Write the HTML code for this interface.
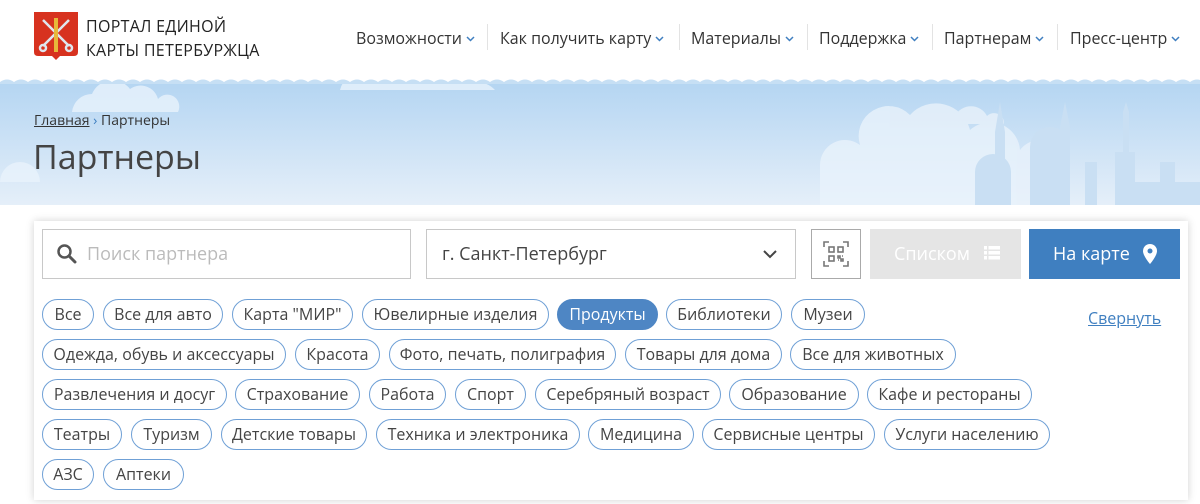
<!DOCTYPE html>
<html><head><meta charset="utf-8"><style>
*{box-sizing:border-box;margin:0;padding:0}
body{width:1200px;height:504px;overflow:hidden;background:#fff;font-family:"Open Sans","Liberation Sans","DejaVu Sans",sans-serif;color:#333;position:relative}
.abs{position:absolute}
.nav{position:absolute;top:27px;font-size:16px;color:#333;white-space:nowrap}
.nav svg{margin-left:4px;vertical-align:2px}
.sep{position:absolute;top:24px;width:1px;height:26px;background:#e3e3e3}
.banner{position:absolute;left:0;top:82px;width:1200px;height:123px;background:linear-gradient(#b4d5f2,#e5eff9);overflow:hidden}
.cloud{position:absolute;background:rgba(240,246,252,.75);border-radius:30px 30px 0 0}
.card{position:absolute;left:34px;top:221px;width:1154px;height:279px;background:#fff;box-shadow:0 0 8px rgba(0,0,0,.18)}
.chip{position:absolute;height:31px;border:1.5px solid #6fa0d6;border-radius:16px;font-size:16px;line-height:28px;text-align:center;color:#444;white-space:nowrap}
.chip.on{background:#4e86c4;border-color:#4e86c4;color:#fff}
</style></head><body>
<svg class="abs" style="left:34px;top:12px" width="44" height="48" viewBox="0 0 44 48"><path d="M0 0H44V40Q44 44 40 44H26L22 48L18 44H4Q0 44 0 40Z" fill="#d7321f"/><g stroke="#dfe6ee" stroke-width="2.5" fill="none"><path d="M9 34L35 8M35 34L9 8"/><circle cx="9" cy="36" r="3"/><circle cx="35" cy="36" r="3"/></g><path d="M20 6h4v34h-4z" fill="#e7b83a"/></svg>
<div class="abs" style="left:86px;top:14px;font-size:16px;line-height:24px;letter-spacing:.3px;color:#222">ПОРТАЛ ЕДИНОЙ<br>КАРТЫ ПЕТЕРБУРЖЦА</div>
<div class="nav" style="left:356px">Возможности<svg width="9" height="6" viewBox="0 0 9 6"><path d="M1 1l3.5 3.5L8 1" stroke="#3f7fc0" stroke-width="1.5" fill="none"/></svg></div>
<div class="sep" style="left:487px"></div>
<div class="nav" style="left:500px">Как получить карту<svg width="9" height="6" viewBox="0 0 9 6"><path d="M1 1l3.5 3.5L8 1" stroke="#3f7fc0" stroke-width="1.5" fill="none"/></svg></div>
<div class="sep" style="left:679px"></div>
<div class="nav" style="left:691px">Материалы<svg width="9" height="6" viewBox="0 0 9 6"><path d="M1 1l3.5 3.5L8 1" stroke="#3f7fc0" stroke-width="1.5" fill="none"/></svg></div>
<div class="sep" style="left:807px"></div>
<div class="nav" style="left:819px">Поддержка<svg width="9" height="6" viewBox="0 0 9 6"><path d="M1 1l3.5 3.5L8 1" stroke="#3f7fc0" stroke-width="1.5" fill="none"/></svg></div>
<div class="sep" style="left:932px"></div>
<div class="nav" style="left:944px">Партнерам<svg width="9" height="6" viewBox="0 0 9 6"><path d="M1 1l3.5 3.5L8 1" stroke="#3f7fc0" stroke-width="1.5" fill="none"/></svg></div>
<div class="sep" style="left:1057px"></div>
<div class="nav" style="left:1070px">Пресс-центр<svg width="9" height="6" viewBox="0 0 9 6"><path d="M1 1l3.5 3.5L8 1" stroke="#3f7fc0" stroke-width="1.5" fill="none"/></svg></div>
<div class="banner">
<svg class="abs" style="left:0;top:0" width="1200" height="123" viewBox="0 0 1200 123"><g fill="#e9f2fb" opacity=".8"><path d="M72 30a20 20 0 0 1 20-18a22 22 0 0 1 38-5a18 18 0 0 1 28 10a12 12 0 0 1 20 13z"/><path d="M340 8a25 25 0 0 1 45-8h90a25 25 0 0 1 20 8z"/><path d="M935 42a12 12 0 0 1 20-8a18 18 0 0 1 32 0a10 10 0 0 1 17 8z"/><path d="M0 100a20 20 0 0 1 40 0z"/><path d="M820 123v-40a25 25 0 0 1 40-20a30 30 0 0 1 50-30a35 35 0 0 1 60 15a30 30 0 0 1 50 20a25 25 0 0 1 40 30v25z"/><path d="M1030 123v-20a18 18 0 0 1 36 0v20z"/></g></svg>
<svg class="abs" style="left:975px;top:20px" width="225" height="103" viewBox="0 0 225 103"><g fill="#c9dff3"><path d="M0 103V70a18 18 0 0 1 36 0V103z"/><path d="M20 103V30l5-30l5 30V103z"/><path d="M55 103V45a20 20 0 0 1 40 0V103z"/><path d="M85 103V25l5-25l5 25V103z"/><path d="M110 103V60h12v43z"/><path d="M140 103V50h20v53z"/><path d="M148 50V10l3-10l3 10V50z"/><path d="M160 103V80h65v23z"/><path d="M185 80V60h15v20z"/></g></svg>
</div>
<svg class="abs" style="left:0;top:76px" width="1200" height="8"><defs><pattern id="w" width="14" height="8" patternUnits="userSpaceOnUse"><path d="M0 6Q7 1 14 6V8H0z" fill="#c6dff4"/></pattern></defs><rect width="1200" height="8" fill="url(#w)"/></svg>
<div class="abs" style="left:34px;top:111px;font-size:14px;color:#333"><span style="text-decoration:underline">Главная</span> <span style="color:#3f7fc0">›</span> Партнеры</div>
<div class="abs" style="left:33px;top:133px;font-size:34px;color:#444">Партнеры</div>
<div class="card"></div>
<div class="abs" style="left:42px;top:229px;width:369px;height:50px;border:1px solid #c8c8c8"></div>
<svg class="abs" style="left:56px;top:243px" width="22" height="22" viewBox="0 0 22 22"><circle cx="8.5" cy="8.5" r="6" stroke="#555" stroke-width="2.5" fill="none"/><path d="M13 13l6 6" stroke="#555" stroke-width="3" stroke-linecap="round"/></svg>
<div class="abs" style="left:87px;top:242px;font-size:18px;color:#bbb">Поиск партнера</div>
<div class="abs" style="left:426px;top:229px;width:370px;height:50px;border:1px solid #c8c8c8"></div>
<div class="abs" style="left:442px;top:242px;font-size:18px;color:#444">г. Санкт-Петербург</div>
<svg class="abs" style="left:762px;top:248px" width="16" height="12" viewBox="0 0 16 12"><path d="M2 3l6 6l6-6" stroke="#444" stroke-width="2" fill="none"/></svg>
<div class="abs" style="left:811px;top:229px;width:50px;height:50px;border:1px solid #aaa"></div>
<svg class="abs" style="left:823px;top:241px" width="26" height="26" viewBox="0 0 26 26" fill="none" stroke="#777" stroke-width="1.6"><path d="M1 6V1h5M20 1h5v5M25 20v5h-5M6 25H1v-5"/><rect x="6" y="6" width="5" height="5"/><rect x="15" y="6" width="5" height="5"/><rect x="6" y="15" width="5" height="5"/><path d="M15 15h2v2h-2zM18 18h2v2h-2zM15 19h1M19 15h1"/></svg>
<div class="abs" style="left:870px;top:229px;width:151px;height:50px;background:#e5e5e5;color:#fff;font-size:18px;line-height:50px;padding-left:24px">Списком</div>
<svg class="abs" style="left:984px;top:246px" width="16" height="14" viewBox="0 0 16 14" fill="#fff"><rect x="0" y="0" width="3" height="3.5"/><rect x="4.5" y="0" width="11.5" height="3.5"/><rect x="0" y="5" width="3" height="3.5"/><rect x="4.5" y="5" width="11.5" height="3.5"/><rect x="0" y="10" width="3" height="3.5"/><rect x="4.5" y="10" width="11.5" height="3.5"/></svg>
<div class="abs" style="left:1029px;top:229px;width:151px;height:50px;background:#3f7fc0;color:#fff;font-size:18px;line-height:50px;padding-left:24px">На карте</div>
<svg class="abs" style="left:1143px;top:244px" width="14" height="20" viewBox="0 0 14 20"><path d="M7 0a7 7 0 0 1 7 7c0 5-7 13-7 13S0 12 0 7a7 7 0 0 1 7-7z" fill="#fff"/><circle cx="7" cy="7" r="2.5" fill="#3f7fc0"/></svg>
<div class="abs" style="left:1088px;top:307px;font-size:16px;color:#3f7fc0;text-decoration:underline">Свернуть</div>
<div class="chip" style="left:42px;top:299px;width:52px">Все</div>
<div class="chip" style="left:103px;top:299px;width:120px">Все для авто</div>
<div class="chip" style="left:232px;top:299px;width:121px">Карта "МИР"</div>
<div class="chip" style="left:362px;top:299px;width:187px">Ювелирные изделия</div>
<div class="chip on" style="left:557px;top:299px;width:101px">Продукты</div>
<div class="chip" style="left:666px;top:299px;width:116px">Библиотеки</div>
<div class="chip" style="left:791px;top:299px;width:74px">Музеи</div>
<div class="chip" style="left:42px;top:339px;width:244px">Одежда, обувь и аксессуары</div>
<div class="chip" style="left:295px;top:339px;width:85px">Красота</div>
<div class="chip" style="left:389px;top:339px;width:227px">Фото, печать, полиграфия</div>
<div class="chip" style="left:625px;top:339px;width:157px">Товары для дома</div>
<div class="chip" style="left:790px;top:339px;width:166px">Все для животных</div>
<div class="chip" style="left:42px;top:379px;width:185px">Развлечения и досуг</div>
<div class="chip" style="left:235px;top:379px;width:125px">Страхование</div>
<div class="chip" style="left:369px;top:379px;width:77px">Работа</div>
<div class="chip" style="left:455px;top:379px;width:71px">Спорт</div>
<div class="chip" style="left:535px;top:379px;width:186px">Серебряный возраст</div>
<div class="chip" style="left:729px;top:379px;width:130px">Образование</div>
<div class="chip" style="left:867px;top:379px;width:165px">Кафе и рестораны</div>
<div class="chip" style="left:42px;top:419px;width:80px">Театры</div>
<div class="chip" style="left:131px;top:419px;width:81px">Туризм</div>
<div class="chip" style="left:221px;top:419px;width:146px">Детские товары</div>
<div class="chip" style="left:376px;top:419px;width:204px">Техника и электроника</div>
<div class="chip" style="left:588px;top:419px;width:106px">Медицина</div>
<div class="chip" style="left:702px;top:419px;width:173px">Сервисные центры</div>
<div class="chip" style="left:884px;top:419px;width:166px">Услуги населению</div>
<div class="chip" style="left:42px;top:459px;width:52px">АЗС</div>
<div class="chip" style="left:103px;top:459px;width:81px">Аптеки</div>
</body></html>
